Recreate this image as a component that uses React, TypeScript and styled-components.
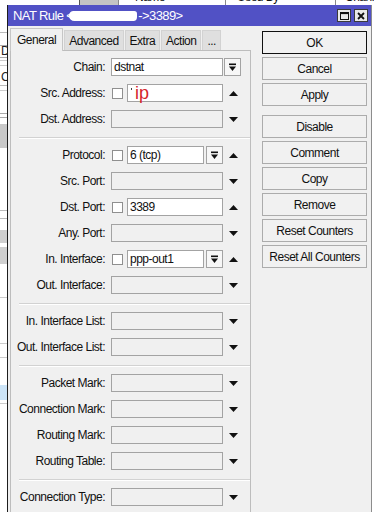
import React from "react";
import styled, { createGlobalStyle } from "styled-components";

const GlobalStyle = createGlobalStyle`
  html, body { margin: 0; padding: 0; background: #fff; }
  body {
    font-family: "Liberation Sans", Arial, sans-serif;
    font-size: 12px;
    letter-spacing: -0.5px;
    color: #111;
  }
`;

const Desktop = styled.div`
  position: relative;
  width: 374px;
  height: 512px;
  overflow: hidden;
  background: #fff;
`;

/* ---------- window behind ---------- */
const BackWindow = styled.div`
  display: flex;
  flex-direction: column;
`;

const HeaderStrip = styled.div`
  display: flex;
  height: 5px;
  overflow: hidden;
`;

const HeaderCell = styled.div<{ $w: number; $pad?: number; $shade?: boolean; $rule?: boolean }>`
  flex: 0 0 ${(p) => p.$w}px;
  box-sizing: border-box;
  height: 5px;
  padding-left: ${(p) => p.$pad ?? 0}px;
  background: ${(p) => (p.$shade ? "#c4c4c4" : "#fff")};
  border-left: ${(p) => (p.$shade ? "1px solid #555" : "none")};
  border-right: ${(p) => (p.$rule || p.$shade ? "1px solid #8a8a8a" : "none")};
  font-size: 12px;
  line-height: 13px;
  white-space: nowrap;
  overflow: hidden;
  & > span { display: block; margin-top: -9px; }
`;

const LeftStrip = styled.div`
  display: flex;
  flex-direction: column;
  width: 7px;
  overflow: hidden;
`;

const Stripe = styled.div<{ $gap: number; $h: number; $bg: string }>`
  margin-top: ${(p) => p.$gap}px;
  height: ${(p) => p.$h}px;
  background: ${(p) => p.$bg};
  font-size: 12px;
  line-height: ${(p) => p.$h}px;
  padding-left: 1px;
  white-space: nowrap;
  color: #222;
`;

const stripes: { gap: number; h: number; bg: string; text?: string }[] = [
  { gap: 27, h: 1, bg: "#bbb" },
  { gap: 12, h: 1, bg: "#aaa" },
  { gap: 0, h: 11, bg: "#fff", text: "D" },
  { gap: 0, h: 1, bg: "#aaa" },
  { gap: 2, h: 1, bg: "#ccc" },
  { gap: 4, h: 1, bg: "#ccc" },
  { gap: 5, h: 12, bg: "#fff", text: "Co" },
  { gap: 2, h: 1, bg: "#bbb" },
  { gap: 4, h: 1, bg: "#ccc" },
  { gap: 22, h: 1, bg: "#aaa" },
  { gap: 3, h: 1, bg: "#aaa" },
  { gap: 6, h: 24, bg: "#c8c8c8" },
  { gap: 62, h: 1, bg: "#bbb" },
  { gap: 7, h: 1, bg: "#bbb" },
  { gap: 11, h: 13, bg: "#cfcfcf" },
  { gap: 4, h: 17, bg: "#cfcfcf" },
  { gap: 33, h: 1, bg: "#ccc" },
  { gap: 45, h: 1, bg: "#ccc" },
  { gap: 13, h: 1, bg: "#ccc" },
  { gap: 27, h: 15, bg: "#cce4f7" },
  { gap: 3, h: 1, bg: "#ccc" },
];

/* ---------- dialog ---------- */
const Dialog = styled.div`
  position: absolute;
  left: 7px;
  top: 5px;
  width: 365px;
  height: 520px;
  box-sizing: border-box;
  display: flex;
  flex-direction: column;
  background: #f0f0f0;
  border-left: 1px solid #1e1e1e;
  border-right: 1px solid #8c8c8c;
`;

const TitleBar = styled.div`
  height: 21px;
  flex: none;
  display: flex;
  align-items: center;
  padding: 0 3px 0 5px;
  background: #5151c5;
  color: #fff;
  font-size: 13px;
  letter-spacing: -0.6px;
  white-space: nowrap;
`;

const Redacted = styled.span`
  display: inline-block;
  width: 68px;
  height: 10px;
  margin: 0 1px 0 -4px;
  background: #fff;
  border-radius: 5px 3px 4px 6px;
`;

const TitleButtons = styled.div`
  margin-left: auto;
  display: flex;
  gap: 3px;
`;

const TitleButton = styled.div`
  width: 14px;
  height: 13px;
  box-sizing: border-box;
  border: 1px solid #3a3a3a;
  background: #e9e9e9;
  display: flex;
  align-items: center;
  justify-content: center;
`;

const Body = styled.div`
  flex: 1;
  display: flex;
  padding-top: 2px;
  min-height: 0;
`;

const LeftPane = styled.div`
  width: 243px;
  flex: none;
  box-sizing: border-box;
  padding-left: 2px;
  display: flex;
  flex-direction: column;
`;

const TabBar = styled.div`
  height: 22px;
  display: flex;
  align-items: flex-end;
  gap: 1px;
  position: relative;
  z-index: 1;
`;

const Tab = styled.div<{ $active?: boolean }>`
  box-sizing: border-box;
  height: ${(p) => (p.$active ? 23 : 20)}px;
  margin-bottom: ${(p) => (p.$active ? -1 : 0)}px;
  padding: 0 ${(p) => (p.$active ? 6 : 4)}px;
  display: flex;
  align-items: center;
  background: ${(p) => (p.$active ? "#f0f0f0" : "#dfdfdf")};
  border: 1px solid ${(p) => (p.$active ? "#c6c6c6" : "#d2d2d2")};
  border-bottom: none;
  white-space: nowrap;
`;

const TabPanel = styled.div`
  flex: 1;
  border: 1px solid #bdbdbd;
  border-bottom: none;
  padding-top: 7px;
  display: flex;
  flex-direction: column;
`;

const Section = styled.div`
  display: flex;
  flex-direction: column;
  gap: 8px;
`;

const Separator = styled.div`
  margin: 9px 0 7px 8px;
  height: 0;
  border-top: 1px solid #d2d2d2;
  border-bottom: 1px solid #fff;
`;

const Row = styled.div`
  display: flex;
  align-items: center;
  height: 18px;
`;

const Label = styled.div`
  width: 94px;
  flex: none;
  margin-right: 6px;
  text-align: right;
  white-space: nowrap;
`;

const Main = styled.div`
  width: 112px;
  flex: none;
  height: 18px;
  display: flex;
  align-items: center;
`;

const Checkbox = styled.div`
  width: 11px;
  height: 11px;
  flex: none;
  box-sizing: border-box;
  margin: 0 4px 0 1px;
  border: 1px solid #8f8f8f;
  background: #fff;
`;

const Field = styled.div<{ $filled?: boolean }>`
  flex: 1;
  min-width: 0;
  height: 18px;
  box-sizing: border-box;
  border: 1px solid #a3a3a3;
  background: ${(p) => (p.$filled ? "#fff" : "#f0f0f0")};
  padding-left: 2px;
  line-height: 16px;
  white-space: nowrap;
  display: flex;
  align-items: flex-start;
`;

const ComboBtn = styled.div<{ $ml: number }>`
  width: 17px;
  height: 18px;
  flex: none;
  box-sizing: border-box;
  margin-left: ${(p) => p.$ml}px;
  border: 1px solid #a3a3a3;
  background: #f7f7f7;
  display: flex;
  align-items: center;
  justify-content: center;
`;

const Tail = styled.div`
  width: 26px;
  flex: none;
  display: flex;
  align-items: center;
`;

const ArrowBox = styled.div`
  margin-left: 6px;
  display: flex;
`;

const Dot = styled.span`
  width: 1px;
  height: 2px;
  margin: 3px 3px 0 1px;
  background: #444;
  flex: none;
`;

const IpMark = styled.span`
  color: #d5262c;
  font-size: 18px;
  letter-spacing: 0;
  line-height: 16px;
`;

const ButtonColumn = styled.div`
  width: 105px;
  flex: none;
  margin-left: 11px;
  padding-top: 3px;
  display: flex;
  flex-direction: column;
  gap: 3px;
`;

const ActionButton = styled.div<{ $primary?: boolean; $spaced?: boolean }>`
  height: 23px;
  box-sizing: border-box;
  margin-top: ${(p) => (p.$spaced ? 6 : 0)}px;
  border: 1px solid ${(p) => (p.$primary ? "#111" : "#acacac")};
  background: #f1f1f1;
  display: flex;
  align-items: center;
  justify-content: center;
  white-space: nowrap;
`;

/* ---------- icons ---------- */
const ComboIcon = () => (
  <svg width="9" height="9" viewBox="0 0 9 9">
    <rect x="1" y="0.5" width="7" height="1.6" fill="#111" />
    <path d="M1 3.5 H8 L4.5 8 Z" fill="#111" />
  </svg>
);

const Arrow = ({ dir }: { dir: "up" | "down" }) => (
  <svg width="9" height="5" viewBox="0 0 9 5">
    <path d={dir === "up" ? "M0 5 L4.5 0 L9 5 Z" : "M0 0 H9 L4.5 5 Z"} fill="#111" />
  </svg>
);

const MaxIcon = () => (
  <svg width="9" height="8" viewBox="0 0 9 8">
    <rect x="0.5" y="0.5" width="8" height="7" fill="none" stroke="#111" strokeWidth="1" />
    <rect x="0.5" y="0.5" width="8" height="1.6" fill="#111" />
  </svg>
);

const CloseIcon = () => (
  <svg width="8" height="8" viewBox="0 0 8 8">
    <path d="M1 1 L7 7 M7 1 L1 7" stroke="#111" strokeWidth="1.8" />
  </svg>
);

/* ---------- data ---------- */
type RowDef = {
  label: string;
  kind: "combo" | "check" | "checkCombo" | "empty";
  value?: React.ReactNode;
  arrow?: "up" | "down";
};

const ipValue = (
  <>
    <Dot />
    <IpMark>ip</IpMark>
  </>
);

const sections: RowDef[][] = [
  [
    { label: "Chain:", kind: "combo", value: "dstnat" },
    { label: "Src. Address:", kind: "check", value: ipValue, arrow: "up" },
    { label: "Dst. Address:", kind: "empty", arrow: "down" },
  ],
  [
    { label: "Protocol:", kind: "checkCombo", value: "6 (tcp)", arrow: "up" },
    { label: "Src. Port:", kind: "empty", arrow: "down" },
    { label: "Dst. Port:", kind: "check", value: "3389", arrow: "up" },
    { label: "Any. Port:", kind: "empty", arrow: "down" },
    { label: "In. Interface:", kind: "checkCombo", value: "ppp-out1", arrow: "up" },
    { label: "Out. Interface:", kind: "empty", arrow: "down" },
  ],
  [
    { label: "In. Interface List:", kind: "empty", arrow: "down" },
    { label: "Out. Interface List:", kind: "empty", arrow: "down" },
  ],
  [
    { label: "Packet Mark:", kind: "empty", arrow: "down" },
    { label: "Connection Mark:", kind: "empty", arrow: "down" },
    { label: "Routing Mark:", kind: "empty", arrow: "down" },
    { label: "Routing Table:", kind: "empty", arrow: "down" },
  ],
  [{ label: "Connection Type:", kind: "empty", arrow: "down" }],
];

const buttons: { text: string; primary?: boolean; spaced?: boolean }[] = [
  { text: "OK", primary: true },
  { text: "Cancel" },
  { text: "Apply" },
  { text: "Disable", spaced: true },
  { text: "Comment" },
  { text: "Copy" },
  { text: "Remove" },
  { text: "Reset Counters" },
  { text: "Reset All Counters" },
];

const tabs = ["General", "Advanced", "Extra", "Action", "..."];

const FormRow = ({ row }: { row: RowDef }) => {
  const hasCheck = row.kind === "check" || row.kind === "checkCombo";
  return (
    <Row>
      <Label>{row.label}</Label>
      <Main>
        {hasCheck && <Checkbox />}
        <Field $filled={row.kind !== "empty"}>{row.value}</Field>
        {row.kind === "checkCombo" && (
          <ComboBtn $ml={2}>
            <ComboIcon />
          </ComboBtn>
        )}
      </Main>
      <Tail>
        {row.kind === "combo" ? (
          <ComboBtn $ml={1}>
            <ComboIcon />
          </ComboBtn>
        ) : (
          row.arrow && (
            <ArrowBox>
              <Arrow dir={row.arrow} />
            </ArrowBox>
          )
        )}
      </Tail>
    </Row>
  );
};

export default function App() {
  return (
    <>
      <GlobalStyle />
      <Desktop>
        <BackWindow>
          <HeaderStrip>
            <HeaderCell $w={79} />
            <HeaderCell $w={40} $shade />
            <HeaderCell $w={107} $pad={16} $rule>
              <span>Name</span>
            </HeaderCell>
            <HeaderCell $w={110} $pad={11} $rule>
              <span>Used By</span>
            </HeaderCell>
            <HeaderCell $w={38} $pad={9}>
              <span>Channe</span>
            </HeaderCell>
          </HeaderStrip>
          <LeftStrip>
            {stripes.map((s, i) => (
              <Stripe key={i} $gap={s.gap} $h={s.h} $bg={s.bg}>
                {s.text}
              </Stripe>
            ))}
          </LeftStrip>
        </BackWindow>

        <Dialog>
          <TitleBar>
            <span>NAT Rule &lt;</span>
            <Redacted />
            <span>-&gt;3389&gt;</span>
            <TitleButtons>
              <TitleButton>
                <MaxIcon />
              </TitleButton>
              <TitleButton>
                <CloseIcon />
              </TitleButton>
            </TitleButtons>
          </TitleBar>
          <Body>
            <LeftPane>
              <TabBar>
                {tabs.map((t, i) => (
                  <Tab key={t} $active={i === 0}>
                    {t}
                  </Tab>
                ))}
              </TabBar>
              <TabPanel>
                {sections.map((sec, si) => (
                  <React.Fragment key={si}>
                    {si > 0 && <Separator />}
                    <Section>
                      {sec.map((r) => (
                        <FormRow key={r.label} row={r} />
                      ))}
                    </Section>
                  </React.Fragment>
                ))}
              </TabPanel>
            </LeftPane>
            <ButtonColumn>
              {buttons.map((b) => (
                <ActionButton key={b.text} $primary={b.primary} $spaced={b.spaced}>
                  {b.text}
                </ActionButton>
              ))}
            </ButtonColumn>
          </Body>
        </Dialog>
      </Desktop>
    </>
  );
}
